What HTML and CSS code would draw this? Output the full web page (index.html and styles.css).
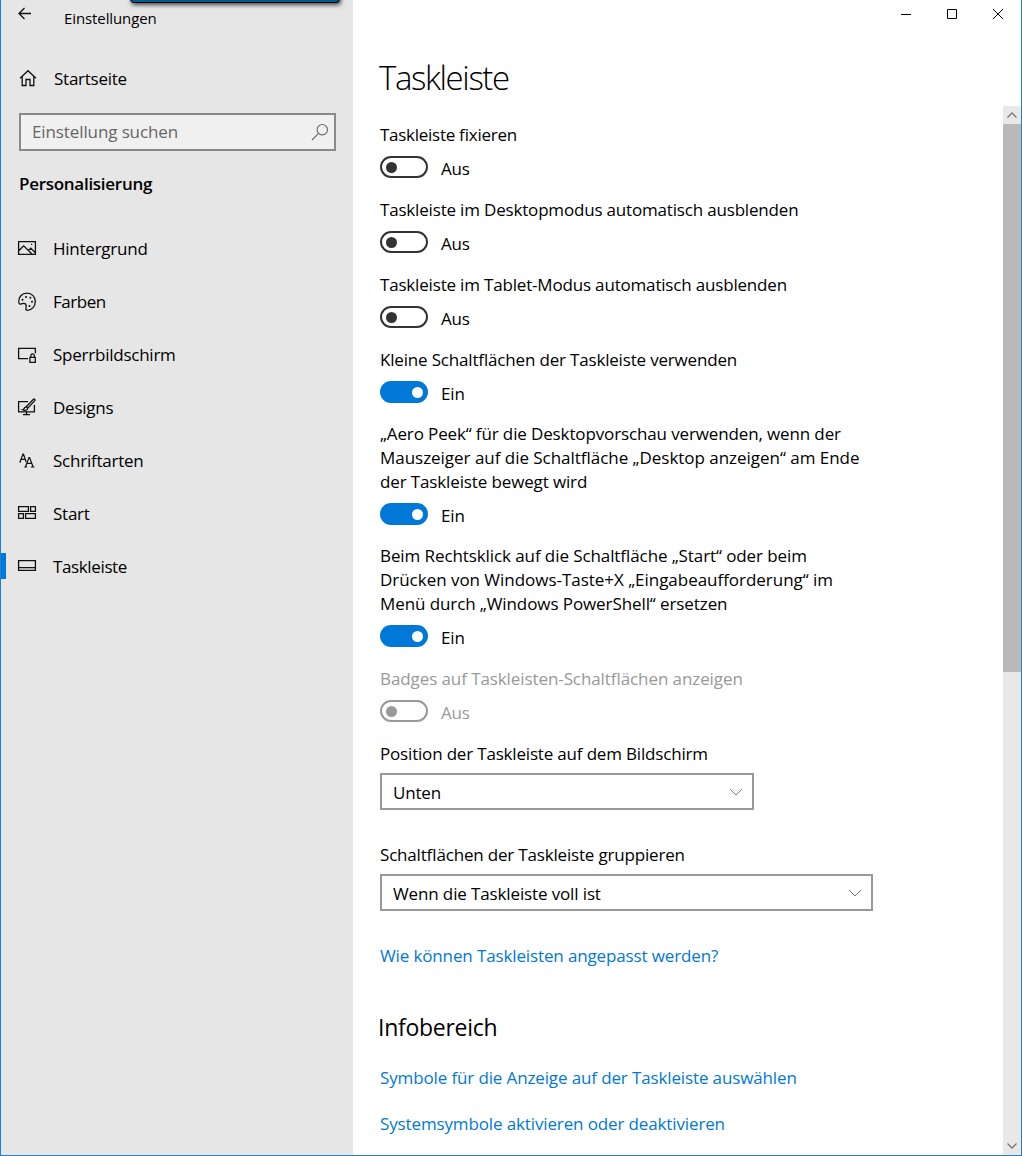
FILE: index.html
```html
<!DOCTYPE html>
<html lang="de">
<head>
<meta charset="utf-8">
<title>Einstellungen</title>
<link rel="stylesheet" href="styles.css">
</head>
<body>
<div class="window">
  <div class="overlap"></div>
  <aside class="sidebar">
    <header class="titlebar">
      <svg class="back" width="14" height="14" viewBox="0 0 14 14"><path d="M13 6.500H1.500M6.500 1L1 6.500 6.500 12"/></svg>
      <span class="t app-title">Einstellungen</span>
    </header>
    <a class="home">
      <svg width="18" height="18" viewBox="0 0 18 18"><path d="M1 9.300L9 1.700l8 7.600M3.200 7.600v8.900h3.800v-6h4v6h3.800V7.600"/></svg>
      <span class="t home-label">Startseite</span>
    </a>
    <div class="search">
      <span class="t placeholder">Einstellung suchen</span>
      <svg width="18" height="18" viewBox="0 0 18 18"><circle cx="11.300" cy="6.700" r="5.200"/><path d="M7.600 10.400L1 17"/></svg>
    </div>
    <h2 class="category">Personalisierung</h2>
    <nav class="nav">
      <a class="item"><svg viewBox="0 0 20 20"><path d="M1.600 2.600h16.800v12.800H1.600zM2 11.500l4.700-4.700 8.500 8.500M11.500 11.500l2.300-2.300 4.400 4.400M14 5.300h1.200"/></svg><span class="t">Hintergrund</span></a>
      <a class="item"><svg viewBox="0 0 20 20"><path d="M1.700 10C1.300 5 5 1.200 10 1.200s8.300 3.700 8.300 8.300-3.300 8.800-7.800 8.800c-2.500 0-1.300-2.300-1.300-4.200 0-1.800-1-2.800-2.500-2.800-2 0-2.800 1.200-3.800.8-.7-.4-1.100-1.100-1.200-2.100z"/><path class="dots" d="M5.500 7.700h.01M9 5h.01M13.300 5.800h.01M15 9.800h.01M12.500 14h.01"/></svg><span class="t farben">Farben</span></a>
      <a class="item"><svg viewBox="0 0 20 20"><path d="M11 13.700H1.600V3.300h16.800v5M12.900 12.300h5.400v5h-5.400zM13.900 12v-1.500c0-2.200 3.400-2.200 3.400 0V12"/></svg><span class="t">Sperrbildschirm</span></a>
      <a class="item"><svg viewBox="0 0 20 20"><path d="M11 3.600H1.600v10.200h15.800V7M9.500 14v3M6 16.700h7M9.200 8.700l7.300-7.400c.8-.7 2 .4 1.300 1.300l-7 7.500zM9 9c-2 .2-1.500 2.500-3.500 2.800 2 1.100 5 .8 5.200-1.500"/></svg><span class="t">Designs</span></a>
      <a class="item"><svg viewBox="0 0 20 20"><path class="thin" d="M3.200 10.500L6 3h.5l2.600 8M4.300 8.300h3.500M2.200 11h1.800M8.500 15.700L12 6.500h.6l3.400 9.200M10 12.400h4.700M7.300 16h2.800M13.800 16h3.700"/></svg><span class="t">Schriftarten</span></a>
      <a class="item"><svg viewBox="0 0 20 20"><path d="M1.600 2.600h9.800v4.800H1.600zM13.600 2.600h4.800v4.800h-4.800zM1.600 9.600h4.800v4.800H1.600zM8.600 9.600h9.800v4.800H8.600z"/></svg><span class="t">Start</span></a>
      <a class="item active"><svg viewBox="0 0 20 20"><path d="M1.600 3.600h16.800v9.800H1.600zM1.600 10.600h16.800"/></svg><span class="t task">Taskleiste</span></a>
    </nav>
  </aside>
  <main class="main">
    <div class="controls">
      <svg viewBox="0 0 12 12"><path d="M1 6.500h10"/></svg>
      <svg viewBox="0 0 12 12"><path d="M1.500 1.500h9v9h-9z"/></svg>
      <svg viewBox="0 0 12 12"><path d="M1 1l10 10M11 1L1 11"/></svg>
    </div>
    <div class="body">
      <div class="content">
        <h1 class="title">Taskleiste</h1>
        <section class="setting"><div class="label"><span class="t ls-fix">Taskleiste fixieren</span></div><div class="row"><span class="toggle"></span><span class="t state">Aus</span></div></section>
        <section class="setting"><div class="label"><span class="t">Taskleiste im Desktopmodus automatisch ausblenden</span></div><div class="row"><span class="toggle"></span><span class="t state">Aus</span></div></section>
        <section class="setting"><div class="label"><span class="t">Taskleiste im Tablet-Modus automatisch ausblenden</span></div><div class="row"><span class="toggle"></span><span class="t state">Aus</span></div></section>
        <section class="setting tight"><div class="label"><span class="t">Kleine Schaltflächen der Taskleiste verwenden</span></div><div class="row"><span class="toggle on"></span><span class="t state">Ein</span></div></section>
        <section class="setting tight"><div class="label"><span class="t ls-mid">„Aero Peek“ für die Desktopvorschau verwenden, wenn der</span><br><span class="t ls-wide">Mauszeiger auf die Schaltfläche „Desktop anzeigen“ am Ende</span><br><span class="t ls-mid">der Taskleiste bewegt wird</span></div><div class="row"><span class="toggle on"></span><span class="t state">Ein</span></div></section>
        <section class="setting"><div class="label"><span class="t ls-soft">Beim Rechtsklick auf die Schaltfläche „Start“ oder beim</span><br><span class="t ls-wide">Drücken von Windows-Taste+X „Eingabeaufforderung“ im</span><br><span class="t ls-soft">Menü durch „Windows PowerShell“ ersetzen</span></div><div class="row"><span class="toggle on"></span><span class="t state">Ein</span></div></section>
        <section class="setting disabled"><div class="label"><span class="t ls-soft">Badges auf Taskleisten-Schaltflächen anzeigen</span></div><div class="row"><span class="toggle"></span><span class="t state">Aus</span></div></section>
        <section class="field"><div class="label"><span class="t">Position der Taskleiste auf dem Bildschirm</span></div><div class="select"><span class="t">Unten</span><svg viewBox="0 0 14 8"><path d="M1 1l6 6 6-6"/></svg></div></section>
        <section class="field"><div class="label"><span class="t">Schaltflächen der Taskleiste gruppieren</span></div><div class="select wide"><span class="t ls-mid">Wenn die Taskleiste voll ist</span><svg viewBox="0 0 14 8"><path d="M1 1l6 6 6-6"/></svg></div></section>
        <a class="link"><span class="t ls-mid">Wie können Taskleisten angepasst werden?</span></a>
        <h2 class="subtitle">Infobereich</h2>
        <a class="link"><span class="t ls-mid">Symbole für die Anzeige auf der Taskleiste auswählen</span></a>
        <a class="link second"><span class="t ls-mid">Systemsymbole aktivieren oder deaktivieren</span></a>
      </div>
      <div class="scrollbar">
        <svg viewBox="0 0 18 18"><path d="M4.500 11.500L9 7l4.500 4.500"/></svg>
        <div class="thumb"></div>
        <svg class="down" viewBox="0 0 18 18"><path d="M4.500 6.500L9 11l4.500-4.500"/></svg>
      </div>
    </div>
  </main>
</div>
</body>
</html>
```
FILE: styles.css
```css
* { box-sizing: border-box; }
body {
  margin: 0;
  font: 17px/24px "Open Sans", "Noto Sans", sans-serif;
  font-feature-settings: "liga" 1;
  color: #000;
}
h1, h2 { margin: 0; font-weight: 400; }
svg { display: block; flex: none; fill: none; stroke: #111; stroke-width: 1.3; }
.t { white-space: nowrap; letter-spacing: -.18px; }
.ls-fix { letter-spacing: -.27px; }
.ls-mid { letter-spacing: -.13px; }
.ls-soft { letter-spacing: -.09px; }
.ls-wide { letter-spacing: -.03px; }
.window {
  position: relative;
  display: flex;
  height: 1156px;
  overflow: hidden;
  background: #fff;
  border: solid #2a80c4;
  border-width: 0 1px 1px;
  border-left-color: #1883d7;
}
.overlap {
  position: absolute;
  left: 129px;
  top: -10px;
  width: 210px;
  height: 13px;
  background: #005a92;
  border: 1px solid #000;
  border-radius: 4px;
  box-shadow: 1px 2px 4px rgba(0, 0, 0, .7);
}
.sidebar { width: 352px; background: #e6e6e6; }
.titlebar { display: flex; height: 30px; padding: 7px 0 0 17px; }
.app-title { margin: -1px 0 0 32px; font-size: 15px; line-height: 24px; letter-spacing: -.1px; }
.home { display: flex; align-items: center; height: 38px; margin-top: 29px; padding-left: 18px; }
.home-label { margin-left: 17px; padding-top: 2px; letter-spacing: -.25px; }
.search {
  display: flex;
  align-items: center;
  justify-content: space-between;
  width: 317px;
  height: 38px;
  margin: 16px 0 0 18px;
  padding: 0 5px 0 11px;
  background: #f0f0f0;
  border: 2px solid #8a8a8a;
  color: #666;
}
.search svg { stroke: #666; stroke-width: 1.1; }
.placeholder { letter-spacing: -.11px; }
.category { margin: 21px 0 0 18px; font-size: 17px; line-height: 24px; font-weight: 600; letter-spacing: -.28px; }
.nav { margin-top: 26px; }
.item { display: flex; align-items: center; height: 53px; padding-left: 16px; }
.item svg { width: 20px; height: 20px; }
.item .dots { stroke-width: 2; stroke-linecap: round; }
.item .thin { stroke-width: 1.2; }
.item .t { margin-left: 16px; letter-spacing: -.24px; }
.item .farben { letter-spacing: -.45px; }
.item .task { letter-spacing: -.37px; }
.active { background: linear-gradient(#0078d7, #0078d7) 0 13px / 5px 26px no-repeat; }
.main { display: flex; flex-direction: column; flex: 1; }
.controls { display: flex; justify-content: flex-end; gap: 34px; height: 62px; padding: 8px 17px 0 0; }
.controls svg { width: 12px; height: 12px; stroke: #000; stroke-width: 1; }
.body { display: flex; justify-content: space-between; flex: 1; min-height: 0; }
.content { padding-left: 27px; }
.title { height: 61px; margin-left: -1px; font-size: 33px; line-height: 32px; font-weight: 300; letter-spacing: -1.4px; }
.setting { margin-bottom: 20px; }
.tight { margin-bottom: 19px; }
.row { display: flex; height: 22px; margin-top: 9px; }
.toggle {
  display: flex;
  align-items: center;
  width: 48px;
  height: 22px;
  padding: 0 4px;
  border: 2px solid #333;
  border-radius: 11px;
}
.toggle::before { content: ""; width: 11px; height: 11px; border-radius: 50%; background: #333; }
.toggle.on { justify-content: flex-end; padding: 0 3px; background: #0078d7; border-color: #0078d7; }
.toggle.on::before { background: #fff; }
.state { margin-left: 13px; line-height: 26px; }
.disabled { color: #999; }
.disabled .toggle { border-color: #999; }
.disabled .toggle::before { background: #999; }
.field { margin-bottom: 33px; }
.select {
  display: flex;
  align-items: center;
  justify-content: space-between;
  width: 374px;
  height: 37px;
  margin-top: 7px;
  padding: 0 9px 0 11px;
  border: 2px solid #999;
}
.wide { width: 493px; }
.select .t { padding-top: 2px; }
.select svg { width: 14px; height: 8px; stroke: #777; stroke-width: 1; }
.link { display: block; color: #0078d7; }
.subtitle { margin: 42px 0 22px -2px; font-size: 23px; line-height: 34px; letter-spacing: -.27px; }
.second { margin-top: 22px; }
.scrollbar { display: flex; flex-direction: column; width: 18px; margin-top: 44px; background: #e8e8e8; }
.scrollbar svg { width: 18px; height: 18px; stroke: #777; stroke-width: 1.3; }
.thumb { height: 548px; background: #b9b9b9; }
.down { margin-top: auto; }
```
